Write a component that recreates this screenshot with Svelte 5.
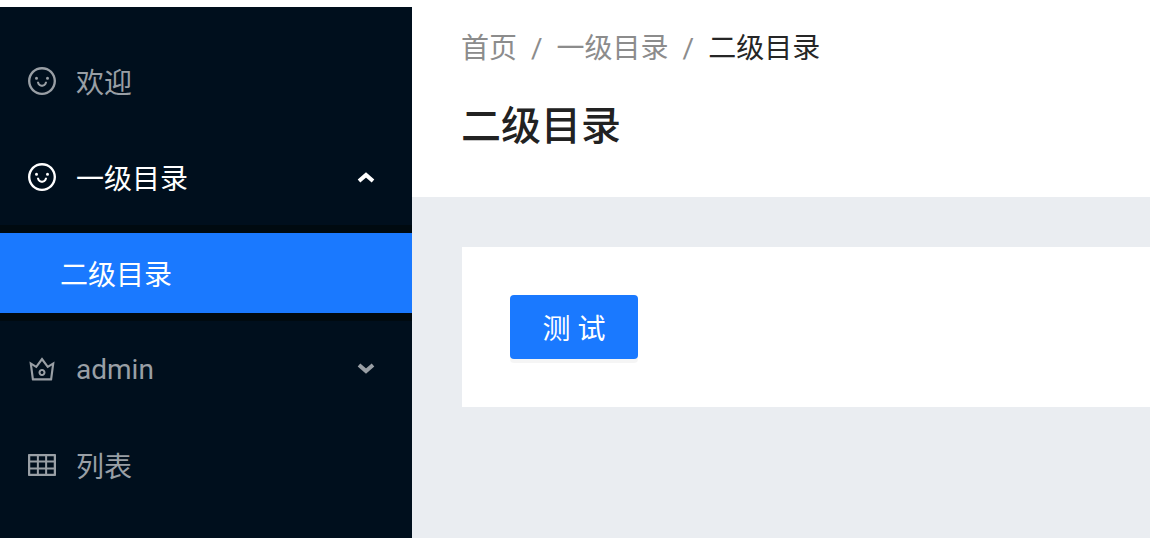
<script>
	let open = $state({ first: true, admin: false });

	const icons = {
		smile:
			'M288 421a48 48 0 1096 0 48 48 0 10-96 0zm352 0a48 48 0 1096 0 48 48 0 10-96 0zM512 64C264.6 64 64 264.6 64 512s200.6 448 448 448 448-200.6 448-448S759.4 64 512 64zm263 711c-34.2 34.2-74 61-118.3 79.8C611 874.2 562.3 884 512 884c-50.3 0-99-9.8-144.8-29.2A370.4 370.4 0 01248.9 775c-34.2-34.2-61-74-79.8-118.3C149.8 611 140 562.3 140 512s9.8-99 29.2-144.8A370.4 370.4 0 01249 248.9c34.2-34.2 74-61 118.3-79.8C413 149.8 461.7 140 512 140c50.3 0 99 9.8 144.8 29.2A370.4 370.4 0 01775.1 249c34.2 34.2 61 74 79.8 118.3C874.2 413 884 461.7 884 512s-9.8 99-29.2 144.8A368.89 368.89 0 01775 775zM664 533h-48.1c-4.2 0-7.8 3.2-8.1 7.4C604 589.9 562.5 629 512 629s-92.1-39.1-95.8-88.6c-.3-4.2-3.9-7.4-8.1-7.4H360a8 8 0 00-8 8.4c4.4 84.3 74.5 151.6 160 151.6s155.6-67.3 160-151.6a8 8 0 00-8-8.4z',
		crown:
			'M899.6 276.5L705 396.4 518.4 147.5a8.06 8.06 0 00-12.9 0L319 396.4 124.3 276.5c-5.7-3.5-13.1 1.2-12.2 7.9L188.5 865c1.1 7.9 7.9 14 16 14h615.1c8 0 14.9-6 15.9-14l76.4-580.6c.8-6.7-6.5-11.4-12.3-7.9zm-126 534.1H250.3l-53.8-409.4 139.8 86.1L512 252.9l175.7 234.4 139.8-86.1-53.9 409.4zM512 509c-62.1 0-112.6 50.5-112.6 112.6S449.9 734.2 512 734.2s112.6-50.5 112.6-112.6S574.1 509 512 509zm0 160.9c-26.6 0-48.2-21.6-48.2-48.3 0-26.6 21.6-48.3 48.2-48.3s48.2 21.6 48.2 48.3c0 26.6-21.6 48.3-48.2 48.3z',
		table:
			'M928 160H96c-17.7 0-32 14.3-32 32v640c0 17.7 14.3 32 32 32h832c17.7 0 32-14.3 32-32V192c0-17.7-14.3-32-32-32zm-40 208H676V232h212v136zm0 224H676V432h212v160zM412 432h200v160H412V432zm200-64H412V232h200v136zm-476 64h212v160H136V432zm0-200h212v136H136V232zm0 424h212v136H136V656zm276 0h200v136H412V656zm476 136H676V656h212v136z'
	};
</script>

{#snippet icon(name)}
	<svg class="icon" viewBox="64 64 896 896" aria-hidden="true"><path d={icons[name]} /></svg>
{/snippet}

{#snippet arrow(up)}
	<svg class="arrow" class:up viewBox="0 0 20 20" aria-hidden="true"><path d="M3 6l7 6 7-6" /></svg>
{/snippet}

<div class="layout">
	<nav class="sider">
		<ul class="menu">
			<li><a class="item" href="#welcome">{@render icon('smile')}<span>欢迎</span></a></li>
			<li>
				<button
					class="item"
					class:active={open.first}
					aria-expanded={open.first}
					onclick={() => (open.first = !open.first)}
				>
					{@render icon('smile')}<span>一级目录</span>{@render arrow(open.first)}
				</button>
				{#if open.first}
					<ul class="submenu">
						<li><a class="item selected" href="#second" aria-current="page">二级目录</a></li>
					</ul>
				{/if}
			</li>
			<li>
				<button
					class="item"
					class:active={open.admin}
					aria-expanded={open.admin}
					onclick={() => (open.admin = !open.admin)}
				>
					{@render icon('crown')}<span>admin</span>{@render arrow(open.admin)}
				</button>
			</li>
			<li><a class="item" href="#list">{@render icon('table')}<span>列表</span></a></li>
		</ul>
	</nav>
	<main>
		<header>
			<nav class="breadcrumb" aria-label="breadcrumb">
				<a href="#home">首页</a>
				<span>/</span>
				<a href="#first">一级目录</a>
				<span>/</span>
				<span class="current">二级目录</span>
			</nav>
			<h1>二级目录</h1>
		</header>
		<section class="card">
			<button class="primary">测 试</button>
		</section>
	</main>
</div>

<style>
	:global(body) {
		margin: 0;
		background: #fff;
		font-family: Roboto, 'Noto Sans CJK SC', sans-serif;
		font-size: 28px;
	}

	.layout {
		display: flex;
		box-sizing: border-box;
		min-height: 100vh;
		padding-top: 7px;
	}

	.sider {
		flex: 0 0 412px;
		background: #000f1d;
	}

	ul {
		list-style: none;
		margin: 0;
		padding: 0;
	}

	.menu {
		display: flex;
		flex-direction: column;
		gap: 16px;
		padding: 34px 0;
	}

	.item {
		display: flex;
		align-items: center;
		gap: 20px;
		box-sizing: border-box;
		width: 100%;
		height: 80px;
		padding: 0 36px 0 28px;
		border: 0;
		background: none;
		color: #999fa5;
		font: inherit;
		text-align: left;
		text-decoration: none;
		cursor: pointer;
	}

	.item.active,
	.item:hover {
		color: #fff;
	}

	.submenu {
		margin: 8px 0 -8px;
		padding: 8px 0;
		background: #000a10;
	}

	.item.selected {
		padding-left: 60px;
		background: #1a79ff;
		color: #fff;
	}

	.icon {
		flex: none;
		width: 28px;
		height: 28px;
		fill: currentColor;
	}

	.arrow {
		width: 20px;
		height: 20px;
		margin-left: auto;
		fill: none;
		stroke: currentColor;
		stroke-width: 4;
	}

	.arrow.up {
		transform: rotate(180deg);
	}

	main {
		flex: 1;
		min-width: 0;
		background: #eaedf1;
	}

	header {
		padding: 20px 49px 38px;
		background: #fff;
	}

	.breadcrumb {
		display: flex;
		gap: 14px;
		line-height: 44px;
		color: #8c8c8c;
	}

	.breadcrumb a {
		color: inherit;
		text-decoration: none;
	}

	.breadcrumb .current {
		color: #262626;
	}

	h1 {
		margin: 24px 0 0;
		color: #222;
		font-size: 40px;
		font-weight: 500;
		line-height: 64px;
	}

	.card {
		margin: 50px 0 0 50px;
		padding: 48px;
		background: #fff;
	}

	.primary {
		display: block;
		min-width: 128px;
		height: 64px;
		padding: 0 28px;
		border: 0;
		border-radius: 4px;
		background: #1a79ff;
		box-shadow: 0 4px 0 rgba(0, 0, 0, 0.04);
		color: #fff;
		font: inherit;
		cursor: pointer;
	}
</style>
